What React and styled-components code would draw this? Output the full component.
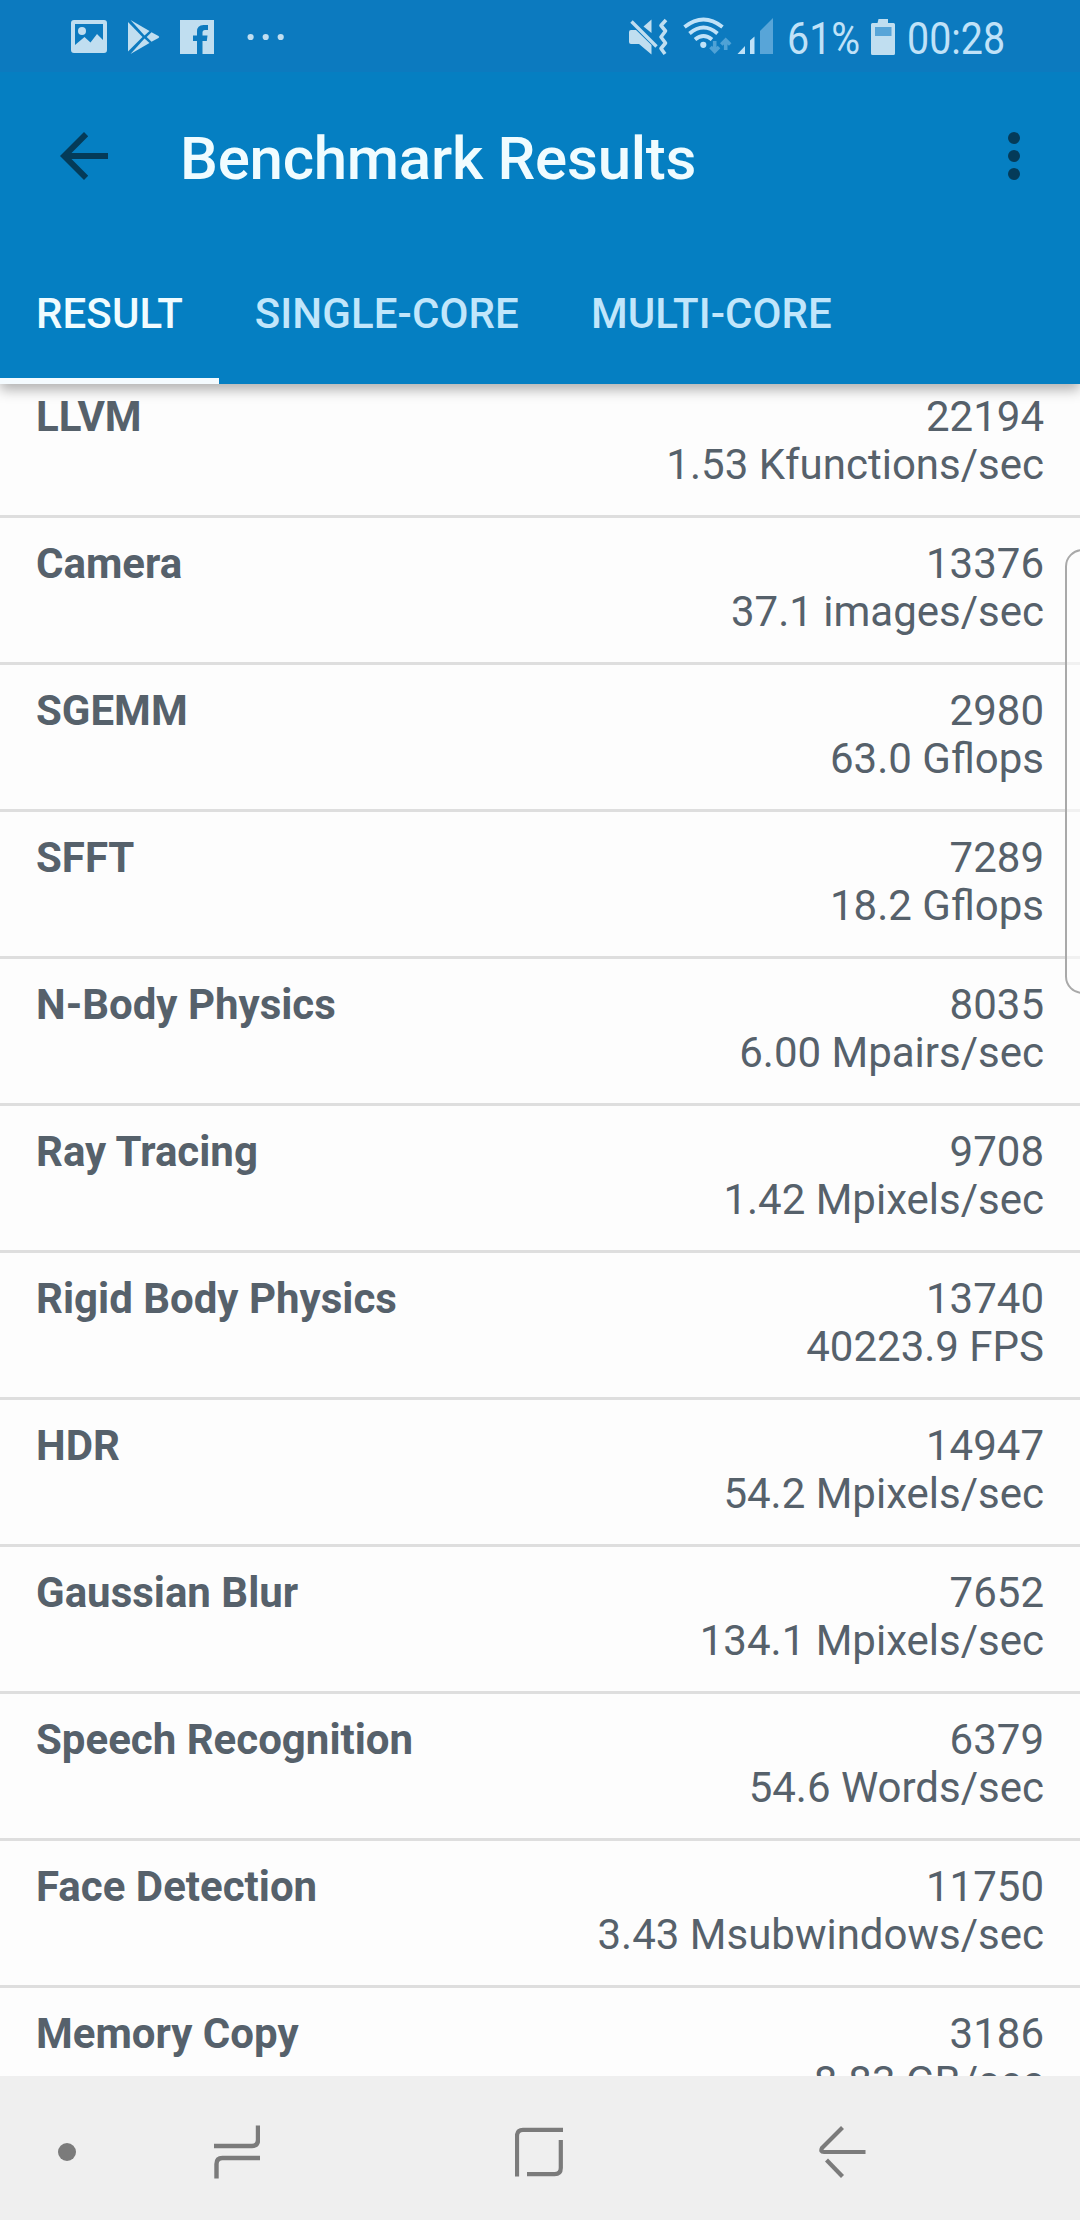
import React from 'react';
import styled, { createGlobalStyle } from 'styled-components';

const results = [
    { name: 'LLVM', score: '22194', rate: '1.53 Kfunctions/sec' },
    { name: 'Camera', score: '13376', rate: '37.1 images/sec' },
    { name: 'SGEMM', score: '2980', rate: '63.0 Gflops' },
    { name: 'SFFT', score: '7289', rate: '18.2 Gflops' },
    { name: 'N-Body Physics', score: '8035', rate: '6.00 Mpairs/sec' },
    { name: 'Ray Tracing', score: '9708', rate: '1.42 Mpixels/sec' },
    { name: 'Rigid Body Physics', score: '13740', rate: '40223.9 FPS' },
    { name: 'HDR', score: '14947', rate: '54.2 Mpixels/sec' },
    { name: 'Gaussian Blur', score: '7652', rate: '134.1 Mpixels/sec' },
    { name: 'Speech Recognition', score: '6379', rate: '54.6 Words/sec' },
    { name: 'Face Detection', score: '11750', rate: '3.43 Msubwindows/sec' },
    { name: 'Memory Copy', score: '3186', rate: '8.83 GB/sec' },
];

const tabs = ['RESULT', 'SINGLE-CORE', 'MULTI-CORE'];

export default function App() {
    return (
        <Screen>
            <GlobalStyle />
            <Header>
                <StatusBar>
                    <StatusLeft>
                        <PictureIcon />
                        <PlayIcon />
                        <FacebookIcon />
                        <MoreDots />
                    </StatusLeft>
                    <StatusRight>
                        <MuteIcon />
                        <WifiIcon />
                        <SignalIcon />
                        <Battery>61%</Battery>
                        <BatteryIcon />
                        <Clock>00:28</Clock>
                    </StatusRight>
                </StatusBar>
                <Toolbar>
                    <IconButton aria-label="Back">
                        <svg width="48" height="48" viewBox="0 0 48 48">
                            <path d="M48 21H11.5L28.2 4.2L24 0L0 24L24 48L28.2 43.8L11.5 27H48Z" fill="#043b59" />
                        </svg>
                    </IconButton>
                    <Title>Benchmark Results</Title>
                    <IconButton aria-label="Menu">
                        <svg width="12" height="48" viewBox="0 0 12 48" fill="#043b59">
                            <circle cx="6" cy="6" r="6" />
                            <circle cx="6" cy="24" r="6" />
                            <circle cx="6" cy="42" r="6" />
                        </svg>
                    </IconButton>
                </Toolbar>
                <TabBar>
                    {tabs.map((tab, i) => (
                        <Tab key={tab} $active={i === 0}>{tab}</Tab>
                    ))}
                </TabBar>
            </Header>
            <List>
                {results.map((item) => (
                    <Row key={item.name}>
                        <Name>{item.name}</Name>
                        <Values>
                            <div>{item.score}</div>
                            <div>{item.rate}</div>
                        </Values>
                    </Row>
                ))}
            </List>
            <EdgeHandle />
            <NavBar>
                <NavDot />
                <RecentsIcon />
                <HomeIcon />
                <BackIcon />
            </NavBar>
        </Screen>
    )
};

/* status bar icons, all 40px high */
const PictureIcon = () => (
    <svg width="36" height="40" viewBox="71 16 36 40">
        <path
            fillRule="evenodd"
            fill="#c0def0"
            d="M74 20H104Q107 20 107 23V50Q107 53 104 53H74Q71 53 71 50V23Q71 20 74 20ZM75 24V45L84.500 37L90.500 42.500L97 34L103 40V24Z"
        />
        <circle cx="82" cy="31" r="4" fill="#c0def0" />
    </svg>
)

const PlayIcon = () => (
    <svg width="32" height="40" viewBox="128 16 32 40" fill="#c0def0">
        <path d="M128 22L142.500 37L128 51.500Z" />
        <path d="M130.500 20L149.500 31L144.500 35.500Z" />
        <path d="M130.500 54L149.500 43L144.500 38.500Z" />
        <path d="M151.500 32.200L158.500 36Q160 37 158.500 38L151.500 41.800L146.700 37Z" />
    </svg>
)

const FacebookIcon = () => (
    <svg width="34" height="40" viewBox="180 16 34 40">
        <path d="M180 20H214V54H202.500V41H206.800L207.500 35.500H202.500V32.500Q202.500 30 205 30H208V25H203.500Q197 25 197 31.500V35.500H193V41H197V54H180Z" fill="#c0def0" />
    </svg>
)

const MoreDots = () => (
    <svg width="38" height="40" viewBox="247 16 38 40" fill="#c0def0">
        <circle cx="250.600" cy="37" r="3.100" />
        <circle cx="265.700" cy="37" r="3.100" />
        <circle cx="280.700" cy="37" r="3.100" />
    </svg>
)

const MuteIcon = () => (
    <svg width="39" height="40" viewBox="629 16 39 40" fill="#c0def0">
        <path d="M631 30H636L651.500 45V54.500L639 44H631Q629 44 629 42V32Q629 30 631 30Z" />
        <path d="M651.500 19.500V33L643.500 26.500Z" />
        <path d="M631.500 21.500L656.500 46.500" stroke="#c0def0" strokeWidth="3.400" />
        <path d="M666 20L661 25.500L665.500 31L661 37L665.500 43L661 48.500L665 54" fill="none" stroke="#c0def0" strokeWidth="3.600" strokeLinejoin="round" />
    </svg>
)

const WifiIcon = () => (
    <svg width="49" height="40" viewBox="683 16 49 40" fill="none">
        <g stroke="#c0e2f8" strokeWidth="3.800">
            <path d="M684.500 27Q703.500 12 722.500 27" />
            <path d="M689.500 33.500Q703.500 21.500 717.500 33.500" />
            <path d="M695 39.500Q703.500 32.500 712 39.500" />
        </g>
        <circle cx="703.300" cy="44.800" r="3.100" fill="#c0e2f8" />
        <g stroke="#4fa2d6" strokeWidth="3.600">
            <path d="M714.700 41V52M710.500 47L714.700 51.500L719 47" />
            <path d="M725.700 50V39.500M721.300 44.500L725.700 40L730.200 44.500" />
        </g>
    </svg>
)

const SignalIcon = () => (
    <svg width="36" height="40" viewBox="737 16 36 40">
        <path d="M737.500 54L745 46V54ZM750 40.500L754.500 36.500V54H750Z" fill="#c0e2f8" />
        <path d="M760 31L773 18V54H760Z" fill="#58a5d8" />
    </svg>
)

const BatteryIcon = () => (
    <svg width="24" height="40" viewBox="871 16 24 40">
        <path d="M878.500 19H888V23H893.500Q895 23 895 24.500V53.500Q895 55 893.500 55H872.500Q871 55 871 53.500V24.500Q871 23 872.500 23H877.500Z" fill="#c0def0" />
        <path d="M875 27H891.500V36H875Z" fill="#58a5d8" />
    </svg>
)

/* bottom bar icons */
const RecentsIcon = () => (
    <svg width="46" height="54" viewBox="214 2125 46 54" fill="none" stroke="#7b7b7b" strokeWidth="4.400">
        <path d="M214 2146H252Q258 2146 258 2140V2125.500" />
        <path d="M260 2158H222.500Q216.500 2158 216.500 2164V2178.500" />
    </svg>
)

const HomeIcon = () => (
    <svg width="48" height="54" viewBox="515 2125 48 54" fill="none" stroke="#7b7b7b" strokeWidth="4.200">
        <path d="M517 2176.500V2136Q517 2129.800 523 2129.800H563" />
        <path d="M527 2174.200H554.500Q560.800 2174.200 560.800 2168V2140" />
    </svg>
)

const BackIcon = () => (
    <svg width="47" height="54" viewBox="819 2125 47 54" fill="none" stroke="#7b7b7b" strokeWidth="4.200">
        <path d="M842.500 2127.500L822 2148Q820 2152 824 2152H865.500" />
        <path d="M826.500 2160L842.500 2176.500" />
    </svg>
)

const GlobalStyle = createGlobalStyle`
    * {
        box-sizing: border-box;
    }
    body {
        margin: 0;
        font-family: Roboto, sans-serif;
        background-color: #fdfdfd;
    }
`

const Screen = styled.div`
    position: relative;
    display: flex;
    flex-direction: column;
    width: 1080px;
    height: 2220px;
    overflow: hidden;
    background-color: #fdfdfd;
`

const Header = styled.div`
    position: relative;
    z-index: 1;
    flex: none;
    height: 384px;
    background-color: #057fc2;
    box-shadow: 0 6px 12px rgba(0, 0, 0, 0.3);
`

const StatusBar = styled.div`
    display: flex;
    justify-content: space-between;
    align-items: center;
    height: 72px;
    padding: 0 75px 0 71px;
    background-color: #0c7abf;
    color: #c0e2f8;
`

const StatusLeft = styled.div`
    display: flex;
    align-items: center;
    svg:nth-child(2) {
        margin-left: 21px;
    }
    svg:nth-child(3) {
        margin-left: 20px;
    }
    svg:nth-child(4) {
        margin-left: 33px;
    }
`

const StatusRight = styled.div`
    display: flex;
    align-items: center;
    height: 72px;
    svg:nth-child(2) {
        margin-left: 15px;
    }
    svg:nth-child(3) {
        margin-left: 5px;
    }
`

const StatusText = styled.span`
    font-size: 45px;
    line-height: 66px;
    white-space: nowrap;
    padding-top: 6px;
    transform: scaleX(0.875);
    transform-origin: left;
`

const Battery = styled(StatusText)`
    width: 84px;
    margin-left: 14px;
`

const Clock = styled(StatusText)`
    width: 98px;
    margin-left: 12px;
`

const Toolbar = styled.div`
    display: flex;
    align-items: center;
    height: 168px;
    padding: 0 60px;
`

const IconButton = styled.button`
    display: flex;
    padding: 0;
    border: none;
    background: none;
`

const Title = styled.h1`
    flex: 1;
    margin: 0 0 0 72px;
    font-size: 60px;
    font-weight: 500;
    line-height: 70px;
    padding-top: 5px;
    letter-spacing: -0.25px;
    color: #f0fcff;
`

const TabBar = styled.div`
    display: flex;
    height: 144px;
`

const Tab = styled.div`
    padding: 0 36px;
    font-size: 42px;
    font-weight: 500;
    line-height: 147px;
    letter-spacing: 0.1px;
    color: ${(props) => (props.$active ? '#f0fcff' : '#c1e6fb')};
    border-bottom: ${(props) => (props.$active ? '6px solid #f4fbff' : 'none')};
`

const List = styled.div`
    flex: 1;
    min-height: 0;
    overflow: hidden;
    margin-top: -13px;
`

const Row = styled.div`
    display: flex;
    justify-content: space-between;
    height: 147px;
    padding: 22px 36px 0;
    border-bottom: 3px solid #dedede;
    font-size: 42px;
    line-height: 48px;
    color: #56616b;
`

const Name = styled.div`
    font-weight: 700;
`

const Values = styled.div`
    text-align: right;
`

/* edge panel grip that floats over the list */
const EdgeHandle = styled.div`
    position: absolute;
    top: 549px;
    right: -20px;
    width: 35px;
    height: 445px;
    border: 2px solid #a9a9a9;
    border-radius: 18px;
    background-color: rgba(253, 253, 253, 0.6);
`

const NavBar = styled.div`
    display: flex;
    align-items: center;
    flex: none;
    height: 144px;
    padding: 8px 0 0 58px;
    background-color: #efefef;
    svg:nth-child(2) {
        margin-left: 138px;
    }
    svg:nth-child(3) {
        margin-left: 255px;
    }
    svg:nth-child(4) {
        margin-left: 256px;
    }
`

const NavDot = styled.div`
    width: 18px;
    height: 18px;
    border-radius: 50%;
    background-color: #7b7b7b;
`
